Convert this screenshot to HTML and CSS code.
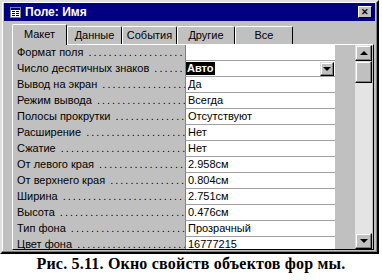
FILE: index.html
```html
<!DOCTYPE html>
<html>
<head>
<meta charset="utf-8">
<link rel="stylesheet" href="styles.css">
</head>
<body>

<div class="window">
	<div class="titlebar">
		<svg class="titleicon" width="11" height="11" viewBox="0 0 11 11">
			<rect x="0.5" y="0.5" width="10" height="10" fill="#ffffff" stroke="#808080"/>
			<rect x="1" y="1" width="9" height="2" fill="#000080"/>
			<rect x="2" y="4" width="3" height="1" fill="#000000"/>
			<rect x="6" y="4" width="3" height="1" fill="#000000"/>
			<rect x="2" y="6" width="3" height="1" fill="#000000"/>
			<rect x="6" y="6" width="3" height="1" fill="#000000"/>
			<rect x="2" y="8" width="3" height="1" fill="#000000"/>
			<rect x="6" y="8" width="3" height="1" fill="#000000"/>
		</svg>
		<span class="titletext">Поле: Имя</span>
		<div class="closebtn">&#x2715;</div>
	</div>

	<div class="tabs">
		<div class="tab active">Макет</div>
		<div class="tab">Данные</div>
		<div class="tab">События</div>
		<div class="tab">Другие</div>
		<div class="tab">Все</div>
	</div>

	<div class="panel">
		<div class="list">
			<div class="row"><div class="label">Формат поля</div><div class="value"></div></div>
			<div class="row"><div class="label">Число десятичных знаков</div><div class="value combo"><span class="selected">Авто</span><div class="dropbtn"><span class="arrowdown"></span></div></div></div>
			<div class="row"><div class="label">Вывод на экран</div><div class="value">Да</div></div>
			<div class="row"><div class="label">Режим вывода</div><div class="value">Всегда</div></div>
			<div class="row"><div class="label">Полосы прокрутки</div><div class="value">Отсутствуют</div></div>
			<div class="row"><div class="label">Расширение</div><div class="value">Нет</div></div>
			<div class="row"><div class="label">Сжатие</div><div class="value">Нет</div></div>
			<div class="row"><div class="label">От левого края</div><div class="value">2.958см</div></div>
			<div class="row"><div class="label">От верхнего края</div><div class="value">0.804см</div></div>
			<div class="row"><div class="label">Ширина</div><div class="value">2.751см</div></div>
			<div class="row"><div class="label">Высота</div><div class="value">0.476см</div></div>
			<div class="row"><div class="label">Тип фона</div><div class="value">Прозрачный</div></div>
			<div class="row"><div class="label">Цвет фона</div><div class="value">16777215</div></div>
		</div>
		<div class="scrollbar">
			<div class="sbtn"><span class="arrowup"></span></div>
			<div class="thumb"></div>
			<div class="track"></div>
			<div class="sbtn"><span class="arrowdown"></span></div>
		</div>
	</div>
</div>

<p class="caption">Рис. 5.11. Окно свойств объектов фор мы.</p>

</body>
</html>
```

FILE: styles.css
```css
body {
  margin: 0;
  background: #ffffff;
  font-family: "Liberation Sans", Arial, sans-serif;
  font-size: 11px;
  color: #000000;
}

.window {
  width: 379px;
  height: 254px;
  box-sizing: border-box;
  background: #c0c0c0;
  border: 2px solid;
  border-color: #dfdfdf #000000 #000000 #dfdfdf;
  box-shadow: inset -1px -1px 0 #808080, inset 1px 1px 0 #ffffff;
  padding: 1px 2px 2px 2px;
  display: flex;
  flex-direction: column;
}

.titlebar {
  height: 18px;
  background: #000080;
  display: flex;
  align-items: center;
  padding: 0 3px 0 6px;
}

.titleicon {
  margin-right: 4px;
}

.titletext {
  color: #ffffff;
  font-weight: bold;
  font-size: 12px;
  flex: 1;
}

.closebtn {
  width: 14px;
  height: 12px;
  box-sizing: border-box;
  background: #c0c0c0;
  border: 1px solid;
  border-color: #ffffff #000000 #000000 #ffffff;
  font-size: 9px;
  font-weight: bold;
  line-height: 10px;
  text-align: center;
}

.tabs {
  display: flex;
  height: 21px;
  margin-top: 2px;
  padding-left: 8px;
  align-items: flex-end;
}

.tab {
  height: 18px;
  box-sizing: border-box;
  border: 1px solid;
  border-bottom: none;
  border-color: #ffffff #000000 #000000 #ffffff;
  border-radius: 2px 2px 0 0;
  padding: 2px 0 0 0;
  text-align: center;
  width: 55px;
}

.tab:nth-child(4),
.tab:nth-child(5) {
  width: 58px;
}

.tab.active {
  height: 21px;
  padding-top: 3px;
  margin-bottom: -1px;
  background: #c0c0c0;
  position: relative;
}

.panel {
  flex: 1;
  min-height: 0;
  margin: 0 1px 0 8px;
  border: 1px solid;
  border-color: #ffffff #000000 #000000 #ffffff;
  display: flex;
  overflow: hidden;
}

.list {
  width: 322px;
  overflow: hidden;
}

.row {
  display: flex;
  height: 16px;
}

.label {
  width: 168px;
  padding-left: 4px;
  white-space: nowrap;
  overflow: hidden;
  line-height: 15px;
}

.label::after {
  content: " ...........................................";
  letter-spacing: 2px;
}

.value {
  width: 150px;
  background: #ffffff;
  border-left: 1px solid #808080;
  border-bottom: 1px solid #a0a0a0;
  padding-left: 2px;
  line-height: 15px;
  box-sizing: border-box;
}

.combo {
  display: flex;
  align-items: center;
  padding-left: 0;
}

.selected {
  background: #000000;
  color: #ffffff;
  font-weight: bold;
  padding: 0 1px;
  line-height: 13px;
  margin-right: auto;
}

.dropbtn,
.sbtn {
  width: 14px;
  height: 14px;
  box-sizing: border-box;
  background: #c0c0c0;
  border: 1px solid;
  border-color: #dfdfdf #000000 #000000 #dfdfdf;
  box-shadow: inset -1px -1px 0 #808080, inset 1px 1px 0 #ffffff;
  display: flex;
  align-items: center;
  justify-content: center;
}

.dropbtn {
  margin-right: 1px;
}

.arrowdown {
  border-left: 4px solid transparent;
  border-right: 4px solid transparent;
  border-top: 4px solid #000000;
}

.arrowup {
  border-left: 4px solid transparent;
  border-right: 4px solid transparent;
  border-bottom: 4px solid #000000;
}

.scrollbar {
  width: 17px;
  margin-left: 20px;
  display: flex;
  flex-direction: column;
}

.sbtn {
  width: 17px;
  height: 16px;
  flex: none;
}

.thumb {
  height: 22px;
  flex: none;
  box-sizing: border-box;
  background: #c0c0c0;
  border: 1px solid;
  border-color: #dfdfdf #000000 #000000 #dfdfdf;
  box-shadow: inset -1px -1px 0 #808080, inset 1px 1px 0 #ffffff;
}

.track {
  flex: 1;
  background: #e4e4e4;
}

.caption {
  margin: 1px 0 0 0;
  width: 382px;
  text-align: center;
  font-family: "Liberation Serif", "Times New Roman", serif;
  font-weight: bold;
  font-size: 16px;
  letter-spacing: 0.2px;
}
```
